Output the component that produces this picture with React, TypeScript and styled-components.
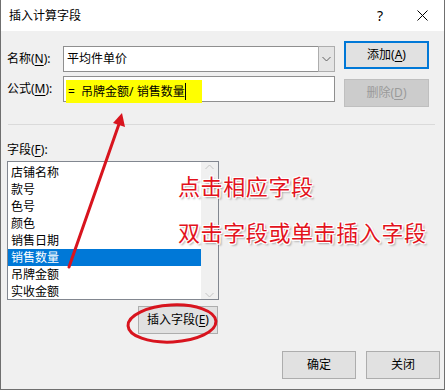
import React from 'react';
import styled, { createGlobalStyle, css } from 'styled-components';

const GlobalStyle = createGlobalStyle`
  html, body {
    margin: 0;
    padding: 0;
    background: #ffffff;
  }
  body {
    font-family: "Noto Sans", "Noto Sans CJK SC", sans-serif;
    font-size: 12px;
    color: #000;
  }
`;

const Window = styled.div`
  position: relative;
  width: 445px;
  height: 390px;
  box-sizing: border-box;
  border: 1px solid #6f6f6f;
  border-top: none;
  background: #f0f0f0;
  display: flex;
  flex-direction: column;
  overflow: hidden;
`;

const TitleBar = styled.div`
  height: 31px;
  flex: none;
  background: #ffffff;
  display: flex;
  align-items: center;
  padding-left: 8px;
`;

const Title = styled.div`
  flex: 1;
  font-size: 12px;
  line-height: 16px;
`;

const TitleHelp = styled.div`
  width: 20px;
  font-size: 14px;
  text-align: center;
  margin-right: 10px;
`;

const TitleClose = styled.div`
  width: 44px;
  height: 31px;
  display: flex;
  align-items: center;
  justify-content: center;
`;

const Body = styled.div`
  flex: 1;
  display: flex;
  flex-direction: column;
  padding: 0 4px 0 6px;
`;

const TopSection = styled.div`
  display: flex;
  align-items: flex-start;
`;

const FieldsColumn = styled.div`
  margin-top: 15px;
  display: flex;
  flex-direction: column;
  gap: 4px;
`;

const FieldRow = styled.div`
  display: flex;
  align-items: center;
  height: 26px;
`;

const Label = styled.div`
  width: 56px;
  line-height: 16px;
  white-space: nowrap;
`;

const Key = styled.span`
  text-decoration: underline;
  text-underline-offset: 2px;
`;

const TextBox = styled.div`
  position: relative;
  width: 272px;
  height: 26px;
  box-sizing: border-box;
  border: 1px solid #8f8f8f;
  background: #ffffff;
  display: flex;
  align-items: center;
  padding-left: 3px;
`;

const ComboText = styled.div`
  flex: 1;
  line-height: 16px;
`;

const ComboArrow = styled.div`
  width: 17px;
  height: 26px;
  margin: -1px -1px -1px 0;
  box-sizing: border-box;
  border: 1px solid #adadad;
  background: #e5e5e5;
  display: flex;
  align-items: center;
  justify-content: center;
`;

const Marker = styled.span`
  display: inline-flex;
  align-items: center;
  align-self: flex-start;
  height: 23px;
  margin-top: 3px;
  margin-left: -1px;
  padding: 0 17px 0 2px;
  background: #ffff00;
  line-height: 16px;
  white-space: pre;
  position: relative;
`;

const Caret = styled.span`
  position: absolute;
  right: 16px;
  top: 3px;
  width: 1px;
  height: 17px;
  background: #000;
`;

const ButtonsColumn = styled.div`
  margin: 10px 0 0 9px;
  display: flex;
  flex-direction: column;
  gap: 10px;
`;

const Button = styled.div<{ $w: number; $primary?: boolean; $disabled?: boolean }>`
  width: ${(p) => p.$w}px;
  height: 28px;
  box-sizing: border-box;
  border: 1px solid #adadad;
  background: #e1e1e1;
  display: flex;
  align-items: center;
  justify-content: center;
  line-height: 16px;
  ${(p) =>
    p.$primary &&
    css`
      border: 2px solid #0078d7;
    `}
  ${(p) =>
    p.$disabled &&
    css`
      border-color: #bfbfbf;
      background: #cccccc;
      color: #9a9a9a;
    `}
`;

const Divider = styled.div`
  height: 1px;
  margin: 17px 5px 0 1px;
  background: #dadada;
`;

const ListLabel = styled.div`
  margin-top: 17px;
  line-height: 16px;
`;

const ListColumn = styled.div`
  width: 212px;
  display: flex;
  flex-direction: column;
`;

const ListBox = styled.div`
  margin-top: 3px;
  height: 139px;
  box-sizing: border-box;
  border: 1px solid #828790;
  background: #ffffff;
  display: flex;
`;

const Items = styled.div`
  flex: 1;
  padding-top: 2px;
`;

const Item = styled.div<{ $selected?: boolean }>`
  height: 17px;
  line-height: 17px;
  padding-left: 3px;
  ${(p) =>
    p.$selected &&
    css`
      background: #0078d7;
      color: #ffffff;
    `}
`;

const ScrollBar = styled.div`
  width: 17px;
  background: #f0f0f0;
  display: flex;
  flex-direction: column;
  justify-content: space-between;
  align-items: center;
  padding: 2px 0 1px;
`;

const InsertButton = styled(Button)`
  align-self: flex-end;
  margin-top: 6px;
  margin-right: 1px;
`;

const Footer = styled.div`
  margin-top: 17px;
  display: flex;
  justify-content: flex-end;
  gap: 10px;
`;

const Overlay = styled.svg`
  position: absolute;
  left: 0;
  top: 0;
  pointer-events: none;
`;

const Note = styled.div<{ $top: number }>`
  position: absolute;
  left: 177px;
  top: ${(p) => p.$top}px;
  font-family: "Noto Sans CJK SC", sans-serif;
  font-size: 22px;
  letter-spacing: 0.6px;
  line-height: 26px;
  color: #e3121c;
  white-space: nowrap;
  text-shadow: 1px 0 0 #fff, -1px 0 0 #fff, 0 1px 0 #fff, 0 -1px 0 #fff,
    1px 1px 0 #fff, -1px -1px 0 #fff, 1px -1px 0 #fff, -1px 1px 0 #fff,
    2px 2px 2px rgba(0, 0, 0, 0.35);
`;

const Chevron = ({ up, color }: { up?: boolean; color: string }) => (
  <svg width="9" height="6" viewBox="0 0 9 6">
    <polyline
      points={up ? '0.5,5 4.5,1 8.5,5' : '0.5,1 4.5,5 8.5,1'}
      fill="none"
      stroke={color}
      strokeWidth="1"
    />
  </svg>
);

const fields = ['店铺名称', '款号', '色号', '颜色', '销售日期', '销售数量', '吊牌金额', '实收金额'];

export default function App() {
  return (
    <>
      <GlobalStyle />
      <Window>
        <TitleBar>
          <Title>插入计算字段</Title>
          <TitleHelp>?</TitleHelp>
          <TitleClose>
            <svg width="11" height="11" viewBox="0 0 11 11">
              <path d="M0.5 0.5 L10.5 10.5 M10.5 0.5 L0.5 10.5" stroke="#000" strokeWidth="1" />
            </svg>
          </TitleClose>
        </TitleBar>
        <Body>
          <TopSection>
            <FieldsColumn>
              <FieldRow>
                <Label>
                  名称(<Key>N</Key>):
                </Label>
                <TextBox>
                  <ComboText>平均件单价</ComboText>
                  <ComboArrow>
                    <Chevron color="#606060" />
                  </ComboArrow>
                </TextBox>
              </FieldRow>
              <FieldRow>
                <Label>
                  公式(<Key>M</Key>):
                </Label>
                <TextBox>
                  <Marker>
                    {'=  吊牌金额/ 销售数量'}
                    <Caret />
                  </Marker>
                </TextBox>
              </FieldRow>
            </FieldsColumn>
            <ButtonsColumn>
              <Button $w={85} $primary>
                添加(<Key>A</Key>)
              </Button>
              <Button $w={85} $disabled>
                删除(<Key>D</Key>)
              </Button>
            </ButtonsColumn>
          </TopSection>
          <Divider />
          <ListLabel>
            字段(<Key>F</Key>):
          </ListLabel>
          <ListColumn>
            <ListBox>
              <Items>
                {fields.map((f) => (
                  <Item key={f} $selected={f === '销售数量'}>
                    {f}
                  </Item>
                ))}
              </Items>
              <ScrollBar>
                <Chevron up color="#c4c4c4" />
                <Chevron color="#c4c4c4" />
              </ScrollBar>
            </ListBox>
            <InsertButton $w={80}>
              插入字段(<Key>E</Key>)
            </InsertButton>
          </ListColumn>
          <Footer>
            <Button $w={74}>确定</Button>
            <Button $w={74}>关闭</Button>
          </Footer>
        </Body>
        <Note $top={172}>点击相应字段</Note>
        <Note $top={218}>双击字段或单击插入字段</Note>
        <Overlay width="445" height="390" viewBox="0 0 445 390">
          <line x1="68" y1="267" x2="118" y2="124" stroke="#d8141e" strokeWidth="3" strokeLinecap="round" />
          <polygon points="121,113 124,127 112,123" fill="#d8141e" />
          <ellipse
            cx="171"
            cy="323.5"
            rx="44"
            ry="18.5"
            fill="none"
            stroke="#d8141e"
            strokeWidth="3"
            transform="rotate(-3 171 323.5)"
          />
        </Overlay>
      </Window>
    </>
  );
}
